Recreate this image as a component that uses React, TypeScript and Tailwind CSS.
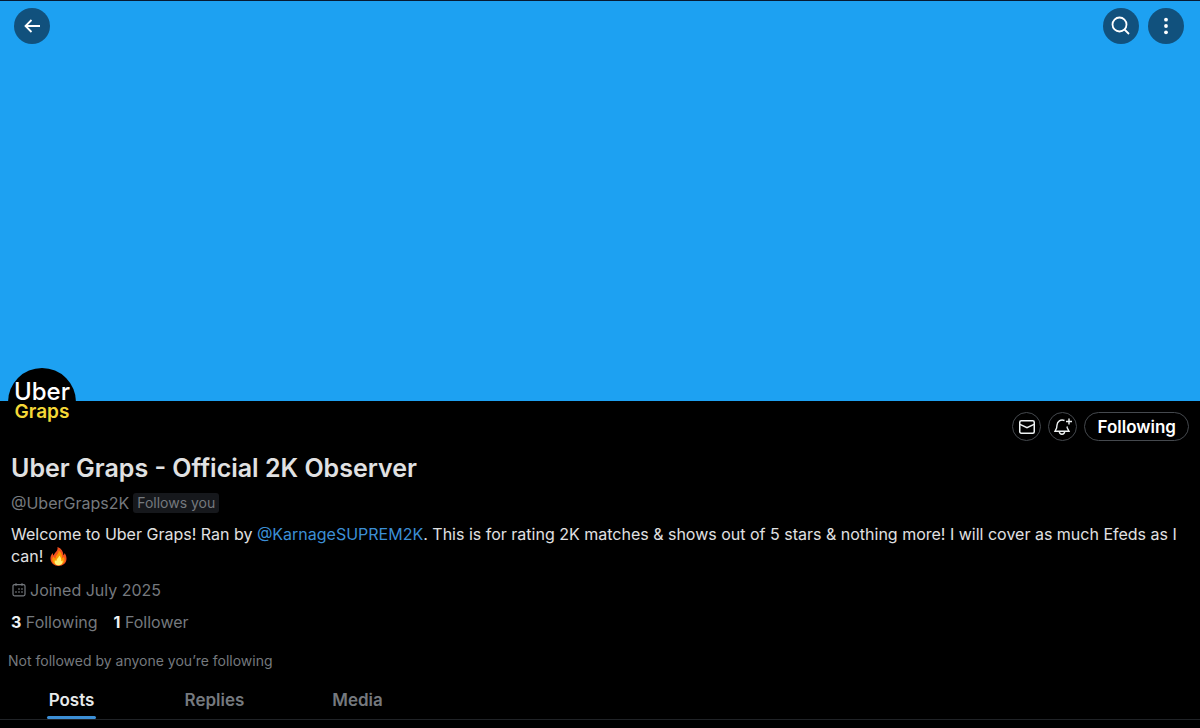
import React, { useState } from "react";

/* ─── Icons ─────────────────────────────────────────────────────── */

const BackIcon: React.FC = () => (
    <svg width="18" height="18" viewBox="0 0 18 18" fill="none" stroke="currentColor" strokeWidth="1.8" aria-hidden="true">
        <path d="M17 9H2.5M8.500 3 2.500 9l6 6" />
    </svg>
);

const SearchIcon: React.FC = () => (
    <svg width="20" height="20" viewBox="0 0 20 20" fill="none" stroke="currentColor" strokeWidth="1.8" aria-hidden="true">
        <circle cx="8.5" cy="8.5" r="7" />
        <path d="m13.500 13.500 4.500 4.500" />
    </svg>
);

const MoreIcon: React.FC = () => (
    <svg width="18" height="18" viewBox="0 0 18 18" fill="currentColor" aria-hidden="true">
        <circle cx="9" cy="2.7" r="1.9" />
        <circle cx="9" cy="9" r="1.9" />
        <circle cx="9" cy="15.3" r="1.9" />
    </svg>
);

const MailIcon: React.FC = () => (
    <svg width="18" height="18" viewBox="0 0 18 18" fill="none" stroke="currentColor" strokeWidth="1.5" aria-hidden="true">
        <rect x="1.75" y="2.75" width="14.5" height="12.5" rx="1.5" />
        <path d="m2 6.3 7 3.4 7-3.4" />
    </svg>
);

const BellPlusIcon: React.FC = () => (
    <svg width="20" height="18" viewBox="0 0 20 18" fill="none" stroke="currentColor" strokeWidth="1.4" aria-hidden="true">
        <path d="M11.500 2.500C7.500 1 4.300 3.500 4 7l-.4 3L2 13.300h14L14.300 10 14 8.500" />
        <path d="M6.300 13.500c.3 3.600 5.100 3.600 5.400 0" />
        <path d="M16 .5v6M13 3.500h6" />
    </svg>
);

const CalendarIcon: React.FC = () => (
    <svg width="14" height="14" viewBox="0 0 14 14" fill="none" stroke="currentColor" strokeWidth="1.2" aria-hidden="true">
        <rect x="1" y="1.6" width="12" height="11.2" rx="1.5" />
        <path d="M4 .2v2.500M10 .2v2.500" />
        <path d="M6.300 6h1.400M9.300 6h1.400M3.300 9h1.400M6.300 9h1.400M9.300 9h1.400" strokeWidth="1.5" />
    </svg>
);

const FireIcon: React.FC = () => (
    <svg className="ml-0.5 inline-block align-[-4px]" width="17" height="19" viewBox="0 0 17 19" role="img" aria-label="fire">
        <path
            fill="#f4511e"
            d="M7.500 0C8 2.800 6.500 4.300 5 6 4.300 6.900 3.900 7.600 3.800 8.500 3 8 2.800 7 2.900 6 1.200 7.700.3 9.700.5 12c.3 4.200 3.700 6.900 8 6.900s8-2.800 8-7.200c0-2.300-.9-4-1.900-5.600-.1 1-.4 1.700-1.200 2.200C13.300 4.300 11.400 1.300 7.500 0Z"
        />
        <path
            fill="#ff9800"
            d="M8.500 3.500c.5 2-.8 3.500-2 5-.8 1-1.100 2-.9 3-1.100-.3-1.700-1.100-1.900-2C2.600 10.600 2 11.800 2.200 13c.4 3 3 5.200 6.300 5.200s6.100-2.200 6.100-5.400c0-1.200-.3-2.100-.8-3-.3.800-.8 1.300-1.600 1.500C12.400 8 11.300 5.300 8.500 3.500Z"
        />
        <path
            fill="#fff176"
            d="M9 8.500c.1 1.700-1.200 2.500-2.100 3.700-.4.600-.6 1.200-.5 1.900-.7-.2-1.100-.6-1.400-1.200-1 2.700.6 5.400 3.600 5.400s4.600-2.300 3.900-5c-.3.600-.7.900-1.300 1C11.500 11.800 10.800 9.800 9 8.500Z"
        />
    </svg>
);

/* ─── Header ────────────────────────────────────────────────────── */

const BannerButton: React.FC<{ label: string; children: React.ReactNode }> = ({ label, children }) => (
    <button
        type="button"
        aria-label={label}
        className="flex h-9 w-9 items-center justify-center rounded-full bg-[#11517d] text-white"
    >
        {children}
    </button>
);

const OutlineButton: React.FC<{ label: string; children: React.ReactNode }> = ({ label, children }) => (
    <button
        type="button"
        aria-label={label}
        className="flex h-[29px] w-[29px] items-center justify-center rounded-full border border-[#45494e] text-[#eff3f4]"
    >
        {children}
    </button>
);

/* ─── Main Component ───────────────────────────────────────────── */

const tabs = ["Posts", "Replies", "Media"];

const App: React.FC = () => {
    const [activeTab, setActiveTab] = useState("Posts");

    return (
        <div className="min-h-screen bg-black font-['Inter',sans-serif] text-[16px] leading-[22px] text-[#e0e1e2]">
            {/* Banner */}
            <header className="border-t border-[#071a33] bg-[#1da1f2]">
                <div className="flex aspect-[3/1] items-start justify-between pt-[7px] pr-4 pl-[14px]">
                    <BannerButton label="Back">
                        <BackIcon />
                    </BannerButton>
                    <div className="flex gap-[9px]">
                        <BannerButton label="Search">
                            <SearchIcon />
                        </BannerButton>
                        <BannerButton label="More">
                            <MoreIcon />
                        </BannerButton>
                    </div>
                </div>
            </header>

            <main>
                {/* Avatar and actions */}
                <div className="flex items-start justify-between pr-[11px] pl-2">
                    <div className="-mt-[33px] flex h-[68px] w-[68px] flex-col items-center justify-center rounded-full bg-black">
                        <span className="text-[24px] leading-5 font-medium text-white">Uber</span>
                        <span className="text-[19px] leading-5 font-semibold text-[#f5d837]">Graps</span>
                    </div>
                    <div className="flex gap-[7px] pt-[11px]">
                        <OutlineButton label="Message">
                            <MailIcon />
                        </OutlineButton>
                        <OutlineButton label="Notify">
                            <BellPlusIcon />
                        </OutlineButton>
                        <button
                            type="button"
                            className="h-[29px] rounded-full border border-[#45494e] px-3 text-[17px] leading-5 font-semibold text-white"
                        >
                            Following
                        </button>
                    </div>
                </div>

                {/* Profile details */}
                <section className="px-[11px] pt-[11px]">
                    <h1 className="text-[25px] leading-8 font-semibold">Uber Graps - Official 2K Observer</h1>
                    <div className="mt-2 flex items-center gap-1 text-[#75797e]">
                        <span>@UberGraps2K</span>
                        <span className="rounded-[3px] bg-[#16181c] px-1 text-[14px] leading-5">Follows you</span>
                    </div>
                    <p className="mt-[9px]">
                        Welcome to Uber Graps! Ran by{" "}
                        <a href="#karnage" className="text-[#3c8fd6]">@KarnageSUPREM2K</a>. This is for rating 2K matches &amp; shows
                        out of 5 stars &amp; nothing more! I will cover as much Efeds as I can! <FireIcon />
                    </p>
                    <div className="mt-3 flex items-center gap-1 pl-px text-[#75797e]">
                        <CalendarIcon />
                        <span>Joined July 2025</span>
                    </div>
                    <div className="mt-[10px] flex gap-4 text-[#75797e]">
                        <a href="#following">
                            <strong className="text-[#eff3f4]">3</strong> Following
                        </a>
                        <a href="#followers">
                            <strong className="text-[#eff3f4]">1</strong> Follower
                        </a>
                    </div>
                </section>
                <p className="mt-[17px] px-2 text-[14px] text-[#75797e]">Not followed by anyone you’re following</p>

                {/* Tabs */}
                <nav className="mt-3 flex border-b border-[#202327]">
                    {tabs.map((tab) => (
                        <button
                            key={tab}
                            type="button"
                            onClick={() => setActiveTab(tab)}
                            className={`flex w-[143px] justify-center text-[17px] font-semibold ${activeTab === tab ? "text-[#e7e9ea]" : "text-[#75797e]"}`}
                        >
                            <span className="pt-[5px]">
                                <span className="px-0.5">{tab}</span>
                                <span
                                    className={`mt-[5px] block h-[3px] rounded-full ${activeTab === tab ? "bg-[#3c8fd6]" : "bg-transparent"}`}
                                />
                            </span>
                        </button>
                    ))}
                </nav>
            </main>
        </div>
    );
};

export default App;
